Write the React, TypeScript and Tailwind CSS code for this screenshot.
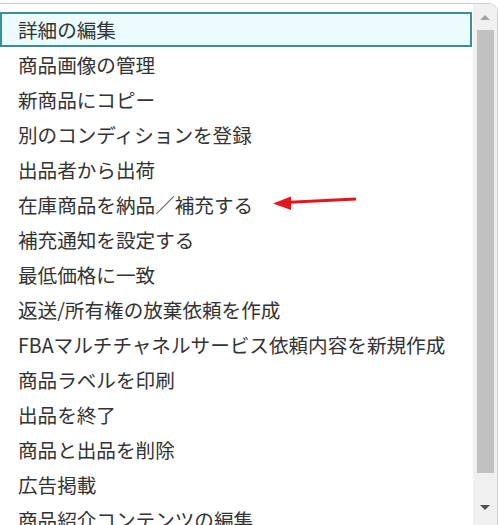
import React from "react";

const items = [
  "詳細の編集",
  "商品画像の管理",
  "新商品にコピー",
  "別のコンディションを登録",
  "出品者から出荷",
  "在庫商品を納品／補充する",
  "補充通知を設定する",
  "最低価格に一致",
  "返送/所有権の放棄依頼を作成",
  "FBAマルチチャネルサービス依頼内容を新規作成",
  "商品ラベルを印刷",
  "出品を終了",
  "商品と出品を削除",
  "広告掲載",
  "商品紹介コンテンツの編集",
];

export default function App() {
  return (
    <div className="relative w-[498px] h-[525px] overflow-hidden bg-white">
      <div
        className="mt-[3px] ml-[-1px] w-[499px] h-[540px] flex border border-[#cfcfcf] rounded-tr-[9px] overflow-hidden"
        style={{ fontFamily: '"Noto Sans CJK JP", "Noto Sans", sans-serif' }}
      >
        <div className="flex-1 pt-[8px]">
          {items.map((t, i) => (
            <div
              key={i}
              className={
                "h-[35px] flex items-center text-[19.6px] text-[#333333] leading-none " +
                (i === 0 ? "border-2 border-[#3a8f9c] bg-[#ebfbfe] pl-[16px] mr-[1px]" : "pl-[18px]")
              }
            >
              {t}
            </div>
          ))}
        </div>
        <div className="w-[24px] bg-[#f0f0f0] flex flex-col items-center">
          <svg width="12" height="8" viewBox="0 0 12 8" className="mt-[10px]">
            <polygon points="1,6 11,6 6,1" fill="#a3a3a3" />
          </svg>
          <div className="mt-[8px] w-[17px] h-[443px] bg-[#c1c1c1]" />
          <svg width="12" height="8" viewBox="0 0 12 8" className="mt-[31px]">
            <polygon points="1,1 11,1 6,6" fill="#505050" />
          </svg>
        </div>
      </div>
      <svg
        className="absolute left-0 top-0"
        width="498"
        height="525"
        viewBox="0 0 498 525"
      >
        <line x1="285" y1="202.5" x2="356" y2="199" stroke="#e8141b" strokeWidth="3" />
        <polygon points="273,203.5 291,196.5 291,210" fill="#e8141b" />
      </svg>
    </div>
  );
}
